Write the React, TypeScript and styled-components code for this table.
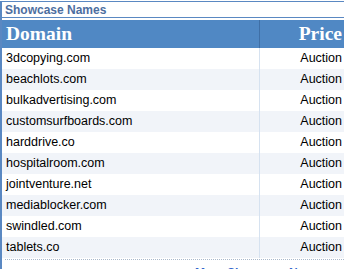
import React from "react";
import styled, { createGlobalStyle } from "styled-components";

const Global = createGlobalStyle`
  html, body { margin: 0; padding: 0; background: #ffffff; }
  body { font-family: "Liberation Sans", Arial, sans-serif; }
`;

const Panel = styled.div`
  width: 344px;
  border-left: 2px solid #5a88c2;
  border-top: 1px solid #5a88c2;
  margin-top: 1px;
  height: 268px;
  box-sizing: border-box;
  overflow: hidden;
`;

const Title = styled.div`
  font: bold 12px "Liberation Sans", Arial, sans-serif;
  color: #4d6e9f;
  padding: 1px 0 0 3px;
  height: 14px;
  line-height: 14px;
  border-bottom: 1px solid #5a88c2;
`;

const Table = styled.div`
  margin-top: 2px;
  display: grid;
  grid-template-columns: 257px 1fr;
`;

const HeadCell = styled.div<{ $right?: boolean }>`
  background: #5088c4;
  color: #ffffff;
  font: bold 19.5px "Liberation Serif", "Times New Roman", serif;
  height: 28px;
  line-height: 28px;
  padding: 0 ${(p) => (p.$right ? "2px" : "0")} 0 ${(p) => (p.$right ? "0" : "4px")};
  text-align: ${(p) => (p.$right ? "right" : "left")};
  border-left: ${(p) => (p.$right ? "1px solid #3f6fa6" : "none")};
`;

const Cell = styled.div<{ $alt: boolean; $right?: boolean }>`
  background: ${(p) => (p.$alt ? "#f1f4f9" : "#ffffff")};
  font: 12.5px "Liberation Sans", Arial, sans-serif;
  color: #000000;
  height: 21px;
  line-height: 21px;
  padding: 0 ${(p) => (p.$right ? "2px" : "0")} 0 ${(p) => (p.$right ? "0" : "4px")};
  text-align: ${(p) => (p.$right ? "right" : "left")};
  border-left: ${(p) => (p.$right ? "1px solid #d6e2f0" : "none")};
`;

const Footer = styled.div`
  margin: 1px 0 0 3px;
  border-top: 1px dotted #a9b8cc;
  padding: 6px 0 0 190px;
  font: bold 12px "Liberation Sans", Arial, sans-serif;
  color: #3366cc;
`;

const domains = [
  "3dcopying.com",
  "beachlots.com",
  "bulkadvertising.com",
  "customsurfboards.com",
  "harddrive.co",
  "hospitalroom.com",
  "jointventure.net",
  "mediablocker.com",
  "swindled.com",
  "tablets.co",
];

export default function App() {
  return (
    <>
      <Global />
      <Panel>
        <Title>Showcase Names</Title>
        <Table>
          <HeadCell>Domain</HeadCell>
          <HeadCell $right>Price</HeadCell>
          {domains.map((d, i) => (
            <React.Fragment key={d}>
              <Cell $alt={i % 2 === 1}>{d}</Cell>
              <Cell $alt={i % 2 === 1} $right>
                Auction
              </Cell>
            </React.Fragment>
          ))}
        </Table>
        <Footer>More Showcase Names</Footer>
      </Panel>
    </>
  );
}
